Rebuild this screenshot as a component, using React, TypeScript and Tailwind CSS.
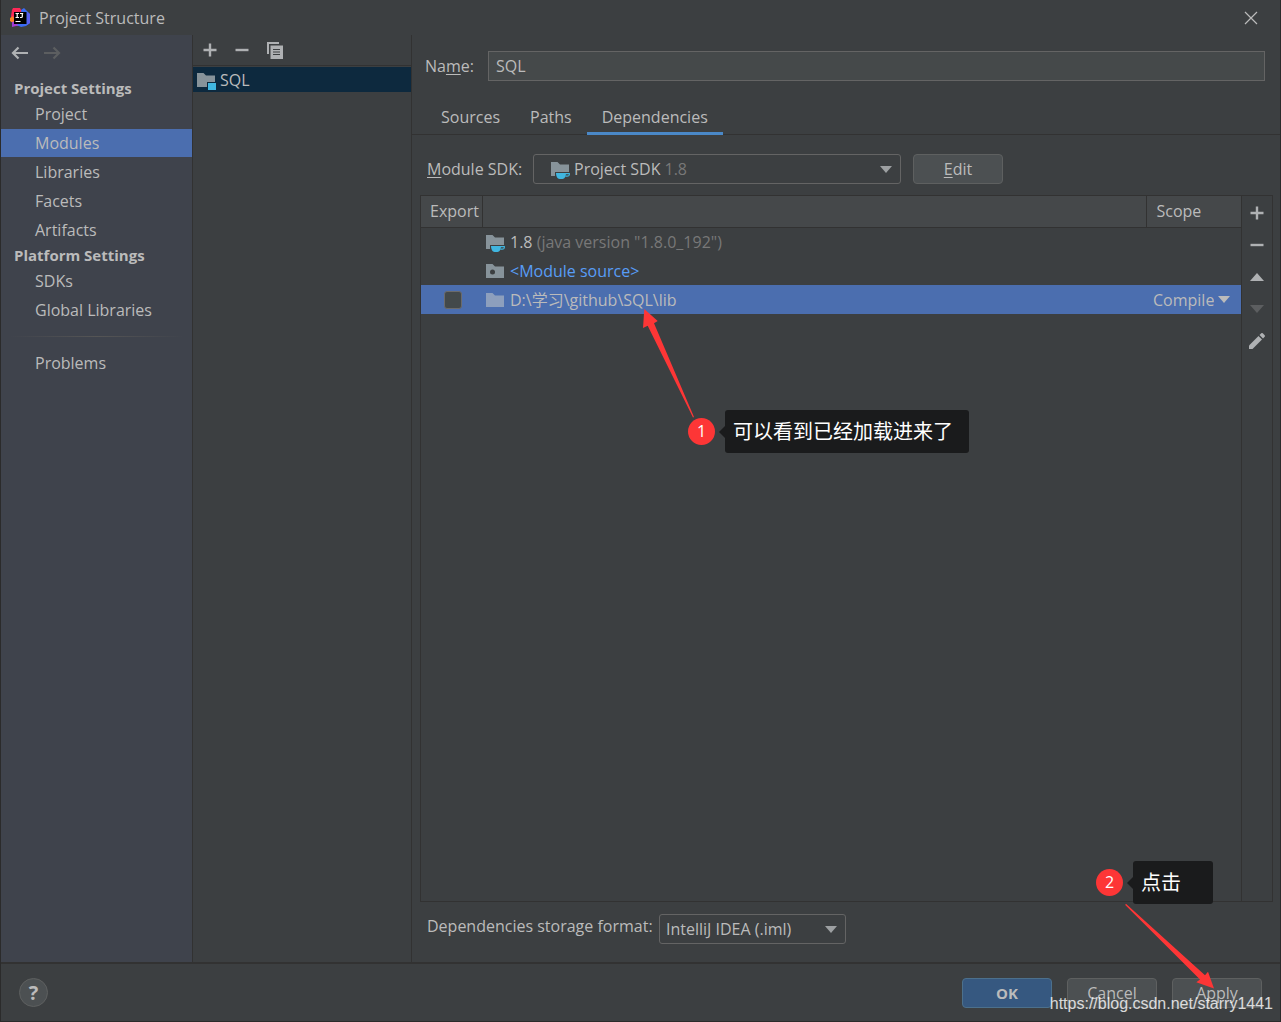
import React, { useState } from "react";

const PROJECT_SETTINGS = ["Project", "Modules", "Libraries", "Facets", "Artifacts"];
const PLATFORM_SETTINGS = ["SDKs", "Global Libraries"];
const TABS = ["Sources", "Paths", "Dependencies"];

type FolderKind = "plain" | "module" | "sdk" | "source";

const FolderIcon: React.FC<{ kind: FolderKind }> = ({ kind }) => (
  <svg width="20" height="20" viewBox="0 0 20 20" className="shrink-0" aria-hidden="true">
    <path
      d="M1 3h6.5l2.5 2.5h9V17H1z"
      fill={kind === "plain" ? "#8d9fbd" : "#87939a"}
    />
    {kind === "module" && (
      <>
        <path d="M11 12h9v8h-9z" fill="#0d293e" />
        <path d="M12 13h8v7h-8z" fill="#40b6e0" />
      </>
    )}
    {kind === "source" && <circle cx="7.5" cy="11" r="2.5" fill="#3c3f41" />}
    {kind === "sdk" && (
      <>
        <path d="M5 13h15v7H7l-2-3z" fill="#3c3f41" />
        <path d="M6 14h10c0 3-1.500 6-3.500 6h-3c-2 0-3.500-3-3.500-6z" fill="#40b6e0" />
        <path d="M15 14.600h4.300v1.200q-0.300 1.300-2 1.300h-2" stroke="#40b6e0" strokeWidth="1.200" fill="none" />
      </>
    )}
  </svg>
);

const PlusIcon = () => (
  <svg width="14" height="14" viewBox="0 0 14 14" aria-hidden="true">
    <path d="M5.800 0.500h2.400v5.300h5.300v2.400H8.200v5.300H5.800V8.200H0.500V5.800h5.300z" fill="#afb1b3" />
  </svg>
);

const MinusIcon = () => (
  <svg width="14" height="14" viewBox="0 0 14 14" aria-hidden="true">
    <path d="M0.500 5.800h13v2.400h-13z" fill="#afb1b3" />
  </svg>
);

const CopyIcon = () => (
  <svg width="16" height="17" viewBox="0 0 16 17" aria-hidden="true">
    <path d="M0 0h12v2H2v10H0z" fill="#afb1b3" />
    <path d="M3.500 3.500H16V17H3.500z" fill="#afb1b3" />
    <path d="M6 7.500h7M6 10h7M6 12.500h7" stroke="#3c3f41" strokeWidth="1" />
  </svg>
);

const ArrowIcon: React.FC<{ dim?: boolean }> = ({ dim }) => (
  <svg width="18" height="14" viewBox="0 0 18 14" fill="none" strokeWidth="2.200" aria-hidden="true">
    {dim ? (
      <path d="M0 7h15M9.500 1.500L15 7l-5.500 5.500" stroke="#5c5e60" />
    ) : (
      <path d="M18 7H3M8.500 1.500L3 7l5.500 5.500" stroke="#afb1b3" />
    )}
  </svg>
);

const Caret: React.FC<{ color?: string }> = ({ color = "#9da0a2" }) => (
  <svg width="12" height="7" viewBox="0 0 12 7" className="shrink-0" aria-hidden="true">
    <path d="M0 0h12L6 7z" fill={color} />
  </svg>
);

const MoveIcon: React.FC<{ up?: boolean }> = ({ up }) => (
  <svg width="14" height="8" viewBox="0 0 14 8" aria-hidden="true">
    {up ? <path d="M7 0l7 8H0z" fill="#afb1b3" /> : <path d="M0 0h14L7 8z" fill="#5c5e60" />}
  </svg>
);

const PencilIcon = () => (
  <svg width="18" height="18" viewBox="0 0 18 18" aria-hidden="true">
    <path d="M1 13.500L10.500 4l3.500 3.500L4.500 17H1z" fill="#afb1b3" />
    <path d="M11.500 3l1.700-1.700q0.800-0.600 1.600 0l1.900 1.900q0.600 0.800 0 1.600L15 6.500z" fill="#afb1b3" />
  </svg>
);

const AppLogo = () => (
  <svg width="20" height="20" viewBox="0 0 20 20" aria-hidden="true">
    <path d="M2 2l1-2h7l2 4-2 6-8 2-1-4z" fill="#fe2857" />
    <path d="M0 10l3-2 2 5-2 2-3-2z" fill="#fd8224" />
    <path d="M2 14l4-1 5 5-5 0-4 1z" fill="#a43dd0" />
    <path d="M11 2l3-2 3 3 3 3v9l-4 3-5 1-4-2 5-5z" fill="#3b6cf5" />
    <path d="M17 4l3 2v9l-3 2z" fill="#5a5ff0" />
    <path d="M4 4h12.500v12H4z" fill="#000" />
    <path d="M5.500 5.500h3.500M7.200 5.500v4M5.500 9.500h3.500M10 5.500h3.200M12.300 5.500v3q0 1-1 1H10M5.500 13.500h5" stroke="#fff" strokeWidth="1.200" fill="none" />
  </svg>
);

const NavItem: React.FC<{ label: string; active?: boolean; onClick: () => void }> = ({ label, active, onClick }) => (
  <button
    type="button"
    onClick={onClick}
    className={`h-7 w-full shrink-0 pl-[34px] text-left ${active ? "bg-[#4b6eaf]" : ""}`}
  >
    {label}
  </button>
);

const Callout: React.FC<{ step: number; text: string; className: string }> = ({ step, text, className }) => (
  <div className={`pointer-events-none absolute flex items-center ${className}`}>
    <span className="flex size-[27px] items-center justify-center rounded-full bg-[#fd3636] pb-0.5 text-white">
      {step}
    </span>
    <svg width="10" height="14" viewBox="0 0 10 14" aria-hidden="true">
      <path d="M10 1v12L4 7z" fill="#1a1b1c" />
    </svg>
    <span className="h-[43px] grow rounded-[3px] bg-[#1a1b1c] px-2 text-xl leading-[44px] text-white">{text}</span>
  </div>
);

const App: React.FC = () => {
  const [page, setPage] = useState("Modules");
  const [tab, setTab] = useState("Dependencies");
  const [name, setName] = useState("SQL");
  const [exported, setExported] = useState(false);

  return (
    <div className="relative flex h-screen flex-col overflow-hidden border-x border-b border-[#2b2b2b] bg-[#3c3f41] font-['Open_Sans','Noto_Sans_CJK_SC',sans-serif] text-base leading-5 text-[#bbbbbb]">
      {/* Title bar */}
      <header className="flex h-[35px] shrink-0 items-center pr-[22px] pl-[9px]">
        <AppLogo />
        <h1 className="ml-[9px] grow">Project Structure</h1>
        <button type="button" aria-label="Close">
          <svg width="14" height="14" viewBox="0 0 14 14" aria-hidden="true">
            <path d="M1 1l12 12M13 1L1 13" stroke="#bbbbbb" strokeWidth="1.200" />
          </svg>
        </button>
      </header>

      <div className="flex min-h-0 grow">
        {/* Settings navigation */}
        <nav className="flex w-48 shrink-0 flex-col border-r border-[#323232] bg-[#3f434c]">
          <div className="flex h-9 shrink-0 items-center gap-4 pl-[9px]">
            <button type="button" aria-label="Back"><ArrowIcon /></button>
            <button type="button" aria-label="Forward" disabled><ArrowIcon dim /></button>
          </div>
          <h2 className="mt-1.5 h-[23px] shrink-0 pl-[13px] text-[15px] leading-[23px] font-bold">Project Settings</h2>
          <div className="flex flex-col gap-px">
            {PROJECT_SETTINGS.map((label) => (
              <NavItem key={label} label={label} active={page === label} onClick={() => setPage(label)} />
            ))}
          </div>
          <h2 className="h-[23px] shrink-0 pl-[13px] text-[15px] leading-[23px] font-bold">Platform Settings</h2>
          <div className="flex flex-col gap-px">
            {PLATFORM_SETTINGS.map((label) => (
              <NavItem key={label} label={label} active={page === label} onClick={() => setPage(label)} />
            ))}
          </div>
          <div className="mx-2 my-3 h-px shrink-0 bg-linear-to-r from-transparent via-[#555555] to-transparent" />
          <NavItem label="Problems" active={page === "Problems"} onClick={() => setPage("Problems")} />
        </nav>

        {/* Module list */}
        <section className="flex w-[219px] shrink-0 flex-col border-r border-[#323232]">
          <div className="mb-px flex h-[31px] shrink-0 items-center gap-[18px] border-b border-[#323232] pl-2.5">
            <button type="button" aria-label="Add module"><PlusIcon /></button>
            <button type="button" aria-label="Remove module"><MinusIcon /></button>
            <button type="button" aria-label="Copy module"><CopyIcon /></button>
          </div>
          <ul>
            <li className="flex h-[25px] items-center gap-1 bg-[#0d293e] pl-[3px]">
              <FolderIcon kind="module" />
              <span>SQL</span>
            </li>
          </ul>
        </section>

        {/* Module editor */}
        <main className="flex min-w-0 grow flex-col">
          <div className="mt-4 flex h-[30px] shrink-0 items-center pr-[15px] pl-[13px]">
            <label htmlFor="module-name" className="w-[63px]">
              Na<span className="underline underline-offset-2">m</span>e:
            </label>
            <input
              id="module-name"
              type="text"
              value={name}
              onChange={(e) => setName(e.target.value)}
              className="h-full min-w-0 grow border border-[#646464] bg-[#45494a] px-[7px] outline-none"
            />
          </div>

          <div role="tablist" className="mt-5 flex h-[34px] shrink-0 border-b border-[#323232] pl-[14px]">
            {TABS.map((t) => (
              <button
                key={t}
                type="button"
                role="tab"
                aria-selected={tab === t}
                onClick={() => setTab(t)}
                className={`-mb-px border-b-[3px] px-[15px] ${tab === t ? "border-[#4a88c7]" : "border-transparent"}`}
              >
                {t}
              </button>
            ))}
          </div>

          <div className="mt-[19px] flex h-[30px] shrink-0 items-center pl-[15px]">
            <label htmlFor="module-sdk" className="w-[106px]">
              <span className="underline underline-offset-2">M</span>odule SDK:
            </label>
            <div className="flex h-full w-[368px] items-center rounded-[3px] border border-[#646464] pr-2 pl-4">
              <FolderIcon kind="sdk" />
              <select id="module-sdk" className="ml-1 field-sizing-content appearance-none bg-transparent outline-none">
                <option>Project SDK</option>
              </select>
              <span className="ml-1 grow text-[#787878]">1.8</span>
              <Caret />
            </div>
            <button type="button" className="ml-3 h-full w-[90px] rounded-[4px] border border-[#5e6060] bg-[#4c5052]">
              <span className="underline underline-offset-2">E</span>dit
            </button>
          </div>

          {/* Dependencies table with its toolbar */}
          <div className="mt-[11px] mr-[7px] ml-2 flex min-h-0 grow border border-[#323232]">
            <div className="min-w-0 grow">
              <table className="w-full table-fixed border-collapse text-left">
                <thead>
                  <tr className="h-[31px] border-b border-[#323232] bg-[#45484a]">
                    <th className="w-[61px] border-r border-[#323232] pl-[9px] font-normal">Export</th>
                    <th className="border-r border-[#323232]" aria-label="Dependency" />
                    <th className="w-[95px] pl-2.5 font-normal">Scope</th>
                  </tr>
                </thead>
                <tbody>
                  <tr className="h-[29px]">
                    <td />
                    <td className="pl-[3px]">
                      <div className="flex items-center gap-[5px]">
                        <FolderIcon kind="sdk" />
                        <span>
                          1.8 <span className="text-[#787878]">(java version "1.8.0_192")</span>
                        </span>
                      </div>
                    </td>
                    <td />
                  </tr>
                  <tr className="h-[29px]">
                    <td />
                    <td className="pl-[3px]">
                      <div className="flex items-center gap-[5px] text-[#589df6]">
                        <FolderIcon kind="source" />
                        <span>&lt;Module source&gt;</span>
                      </div>
                    </td>
                    <td />
                  </tr>
                  <tr className="h-[29px] bg-[#4b6eaf]">
                    <td className="pl-[23px]">
                      <input
                        type="checkbox"
                        aria-label="Export lib"
                        checked={exported}
                        onChange={(e) => setExported(e.target.checked)}
                        className="block size-[18px] appearance-none rounded-[3px] border border-[#6b6b6b] bg-[#43494a]"
                      />
                    </td>
                    <td className="pl-[3px]">
                      <div className="flex items-center gap-[5px]">
                        <FolderIcon kind="plain" />
                        <span>D:\学习\github\SQL\lib</span>
                      </div>
                    </td>
                    <td className="pl-[7px]">
                      <div className="flex items-center gap-1">
                        <select aria-label="Scope" className="field-sizing-content appearance-none bg-transparent outline-none">
                          <option>Compile</option>
                        </select>
                        <Caret color="#bbbbbb" />
                      </div>
                    </td>
                  </tr>
                </tbody>
              </table>
            </div>
            <div className="flex w-[31px] shrink-0 flex-col items-center border-l border-[#323232] pt-px">
              <button type="button" aria-label="Add" className="flex h-8 items-center"><PlusIcon /></button>
              <button type="button" aria-label="Remove" className="flex h-8 items-center"><MinusIcon /></button>
              <button type="button" aria-label="Move up" className="flex h-8 items-center"><MoveIcon up /></button>
              <button type="button" aria-label="Move down" disabled className="flex h-8 items-center"><MoveIcon /></button>
              <button type="button" aria-label="Edit dependency" className="flex h-8 items-center"><PencilIcon /></button>
            </div>
          </div>

          <div className="mt-3 mb-[18px] flex h-[30px] shrink-0 pl-[15px]">
            <label htmlFor="storage-format" className="w-[232px] pt-0.5">Dependencies storage format:</label>
            <div className="flex w-[187px] items-center rounded-[3px] border border-[#646464] pr-2 pl-1.5">
              <select id="storage-format" className="min-w-0 grow appearance-none bg-transparent outline-none">
                <option>IntelliJ IDEA (.iml)</option>
              </select>
              <Caret />
            </div>
          </div>
        </main>
      </div>

      {/* Dialog buttons */}
      <footer className="flex h-[59px] shrink-0 items-center gap-[15px] border-t-2 border-[#323232] px-[18px]">
        <button
          type="button"
          aria-label="Help"
          className="mr-auto size-[29px] rounded-full border border-[#5e6060] bg-[#4c5052] text-xl leading-5 font-bold"
        >
          ?
        </button>
        <button type="button" className="h-[30px] w-[90px] rounded-[4px] border border-[#4c708c] bg-[#365880] text-[15px] font-bold">OK</button>
        <button type="button" className="h-[30px] w-[90px] rounded-[4px] border border-[#5e6060] bg-[#4c5052]">Cancel</button>
        <button type="button" className="h-[30px] w-[90px] rounded-[4px] border border-[#5e6060] bg-[#4c5052]">Apply</button>
      </footer>

      {/* Tutorial notes over the dialog */}
      <Callout step={1} text="可以看到已经加载进来了" className="top-[410px] left-[687px] w-[281px]" />
      <svg width="52" height="110" viewBox="0 0 52 110" className="pointer-events-none absolute top-[308px] left-[642px]" aria-hidden="true">
        <path d="M1.300 1L14.700 13l-3.700 2.300L51 109l-1 0.500L4.700 17.700 0 20z" fill="#fd3636" />
      </svg>
      <Callout step={2} text="点击" className="right-[67px] bottom-[117px] w-[117px]" />
      <svg width="90" height="86" viewBox="0 0 90 86" className="pointer-events-none absolute right-[65px] bottom-[31px]" aria-hidden="true">
        <path d="M0 0.800L1.200 0 80 71.200l3-3.400L89 84.500 71.300 78.200l3.700-2.700z" fill="#fd3636" />
      </svg>
      <span className="pointer-events-none absolute right-[7px] bottom-[7px] font-['Liberation_Sans',sans-serif] text-white/80">
        https://blog.csdn.net/starry1441
      </span>
    </div>
  );
};

export default App;
